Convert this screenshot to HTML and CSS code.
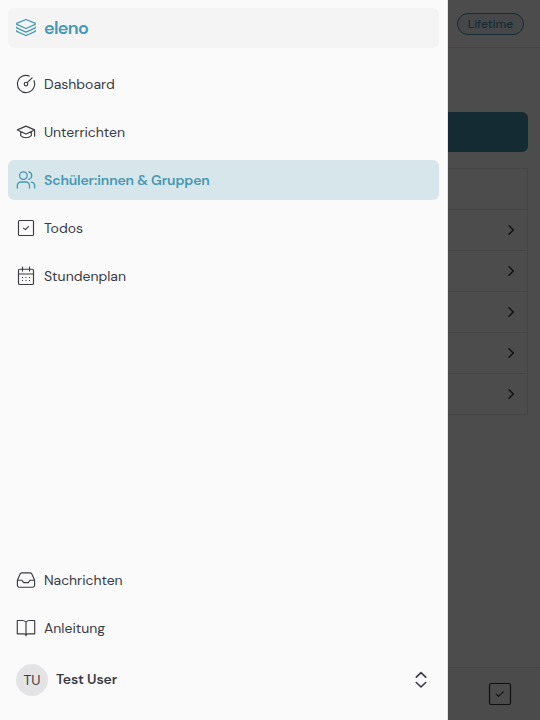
FILE: index.html
```html
<!DOCTYPE html>
<html lang="de">
<head>
<meta charset="utf-8">
<meta name="viewport" content="width=device-width">
<title>eleno</title>
<link rel="stylesheet" href="styles.css">
</head>
<body>
<div class="page">
  <header class="topbar"><span class="badge">Lifetime</span></header>
  <main class="content">
    <div class="primary-button"></div>
    <div class="table">
      <div class="row"></div>
      <div class="row"><svg class="chevron" viewBox="0 0 16 16"><path d="M6 3.7l4.3 4.3L6 12.3"/></svg></div>
      <div class="row"><svg class="chevron" viewBox="0 0 16 16"><path d="M6 3.7l4.3 4.3L6 12.3"/></svg></div>
      <div class="row"><svg class="chevron" viewBox="0 0 16 16"><path d="M6 3.7l4.3 4.3L6 12.3"/></svg></div>
      <div class="row"><svg class="chevron" viewBox="0 0 16 16"><path d="M6 3.7l4.3 4.3L6 12.3"/></svg></div>
      <div class="row"><svg class="chevron" viewBox="0 0 16 16"><path d="M6 3.7l4.3 4.3L6 12.3"/></svg></div>
    </div>
  </main>
  <footer class="bottombar"><svg class="todo-icon" viewBox="0 0 24 24"><rect x="1.5" y="1.5" width="21" height="21" rx="1.5"/><path d="M8.3 12.3l2.3 2.1 4.7-4.5"/></svg></footer>
</div>
<div class="overlay"></div>
<aside class="sidebar">
  <a class="item brand">
    <svg class="icon" viewBox="0 0 20 20"><path d="M10 1.5L.7 5.3v1L10 10.5l9.3-4.2v-1zM.7 9.2v.7L10 14.1l9.3-4.2v-.7M.7 12.6v.7l9.3 4.2 9.3-4.2v-.7"/></svg>
    <span class="label name">eleno</span>
  </a>
  <nav class="nav">
    <a class="item">
      <svg class="icon" viewBox="0 0 20 20"><path d="M13.3 2A8.6 8.6 0 1 0 18 6.7M11.2 8.7l4.9-4.9"/><circle cx="10" cy="10" r="1.8"/></svg>
      <span class="label">Dashboard</span>
    </a>
    <a class="item">
      <svg class="icon" viewBox="0 0 20 20"><path d="M10 4.1L1.4 7.9l8.6 4 8.6-4zM18.6 7.9v6.3M4.7 9.6v4.1c2.8 2.7 7.8 2.7 10.6 0V9.6"/></svg>
      <span class="label teach">Unterrichten</span>
    </a>
    <a class="item active">
      <svg class="icon" viewBox="0 0 20 20"><circle cx="7.4" cy="5.6" r="3.8"/><path d="M1.3 18v-2.3a3.7 3.7 0 0 1 3.7-3.7h4.8a3.7 3.7 0 0 1 3.7 3.7V18M12.8 1.9a3.8 3.8 0 0 1 0 7.4M15.4 12.2a3.7 3.7 0 0 1 3.3 3.5V18"/></svg>
      <span class="label students">Schüler:innen &amp; Gruppen</span>
    </a>
    <a class="item">
      <svg class="icon" viewBox="0 0 20 20"><rect x="2.5" y="2.5" width="15" height="15" rx="1"/><path d="M7.5 10.1l1.8 1.5 3.2-3"/></svg>
      <span class="label">Todos</span>
    </a>
    <a class="item">
      <svg class="icon" viewBox="0 0 20 20"><rect x="2.5" y="3.2" width="15" height="15.3" rx="1.3"/><path d="M2.5 8h15M6.5 1v4M13.5 1v4"/><path class="dots" d="M6 11.5h1M9.5 11.5h1M13 11.5h1M6 14.5h1M9.5 14.5h1M13 14.5h1"/></svg>
      <span class="label">Stundenplan</span>
    </a>
  </nav>
  <div class="nav secondary">
    <a class="item">
      <svg class="icon" viewBox="0 0 20 20"><path d="M1.4 10.2L4 4.2a2 2 0 0 1 1.8-1.3h8.4A2 2 0 0 1 16 4.2l2.6 6v5a2 2 0 0 1-2 2H3.4a2 2 0 0 1-2-2zM1.4 10.2h4.3l2.1 2.4h4.4l2.1-2.4h4.3"/></svg>
      <span class="label messages">Nachrichten</span>
    </a>
    <a class="item">
      <svg class="icon" viewBox="0 0 20 20"><path d="M10 4.1C9 2.9 7.6 2.5 6.3 2.5h-5v13.3H8a2 2 0 0 1 2 2 2 2 0 0 1 2-2h6.7V2.5h-5C12.4 2.5 11 2.9 10 4.1zM10 4.1v13.5"/></svg>
      <span class="label">Anleitung</span>
    </a>
  </div>
  <div class="user">
    <span class="avatar">TU</span>
    <span class="label username">Test User</span>
    <svg class="sort" viewBox="0 0 16 20"><path d="M3.3 7.2L8 2.7l4.7 4.5M3.3 12.5L8 17l4.7-4.5"/></svg>
  </div>
</aside>
</body>
</html>
```
FILE: styles.css
```css
* { box-sizing: border-box; }

body {
  margin: 0;
  overflow: hidden;
  color: #3b3b43;
  font-family: "DM Sans", Inter, "Liberation Sans", sans-serif;
  font-size: 14px;
}

svg {
  flex: none;
  fill: none;
  stroke: currentColor;
  stroke-linecap: round;
  stroke-linejoin: round;
}

.page {
  display: flex;
  flex-direction: column;
  height: 720px;
  background: #fdfdfd;
}

.topbar {
  display: flex;
  align-items: center;
  justify-content: flex-end;
  height: 48px;
  padding-right: 16px;
  border-bottom: 1px solid #e4e4e7;
}

.badge {
  display: flex;
  align-items: center;
  justify-content: center;
  width: 67px;
  height: 22px;
  border: 1px solid #4795af;
  border-radius: 11px;
  background: #e7eff2;
  color: #4795af;
  font-size: 12px;
  font-weight: 500;
  letter-spacing: -0.05px;
}

.content {
  flex: 1;
  padding: 64px 12px 0;
}

.primary-button {
  height: 40px;
  margin-bottom: 16px;
  border-radius: 6px;
  background: #4990ad;
}

.table {
  border: 1px solid #e7e7e9;
}

.row {
  display: flex;
  align-items: center;
  justify-content: flex-end;
  height: 41px;
  padding-right: 8px;
  border-bottom: 1px solid #e7e7e9;
}

.row:last-child {
  height: 40px;
  border-bottom: 0;
}

.chevron {
  width: 16px;
  height: 16px;
  stroke-width: 1.5;
}

.bottombar {
  display: flex;
  align-items: center;
  justify-content: flex-end;
  height: 53px;
  padding-right: 28px;
  border-top: 1px solid #ededee;
  background: #fafafa;
}

.todo-icon {
  width: 24px;
  height: 24px;
  stroke-width: 1.2;
}

.overlay {
  position: fixed;
  inset: 0;
  background: rgba(0, 0, 0, 0.7);
}

.sidebar {
  position: fixed;
  inset: 0 auto 0 0;
  display: flex;
  flex-direction: column;
  width: 448px;
  padding: 8px;
  border-right: 1px solid #e4e4e7;
  background: #fafafa;
}

.item {
  display: flex;
  align-items: center;
  gap: 8px;
  height: 40px;
  padding: 0 8px;
  border-radius: 6px;
}

.brand {
  margin-bottom: 16px;
  background: #f4f4f4;
  color: #4698b4;
}

.active {
  background: #d7e6ea;
  color: #4698b4;
  font-weight: 600;
}

.icon {
  width: 20px;
  height: 20px;
  stroke-width: 1.15;
}

.active .icon,
.brand .icon {
  stroke-width: 1.3;
}

.dots {
  stroke-linecap: butt;
}

.nav {
  display: flex;
  flex-direction: column;
  gap: 8px;
}

.secondary { margin-top: auto; }

.label { white-space: nowrap; }

.name {
  font-size: 18px;
  font-weight: 600;
  letter-spacing: -0.7px;
}

.teach { letter-spacing: -0.05px; }
.messages { letter-spacing: -0.06px; }
.students { letter-spacing: -0.15px; }

.user {
  display: flex;
  align-items: center;
  gap: 8px;
  height: 48px;
  margin: 8px 0;
  padding: 0 10px 0 8px;
}

.username {
  padding-bottom: 2px;
  font-weight: 600;
  letter-spacing: -0.12px;
}

.avatar {
  display: flex;
  align-items: center;
  justify-content: center;
  width: 32px;
  height: 32px;
  border-radius: 50%;
  background: #e4e4e7;
}

.sort {
  width: 16px;
  height: 20px;
  margin-left: auto;
  stroke-width: 1.65;
}
```
